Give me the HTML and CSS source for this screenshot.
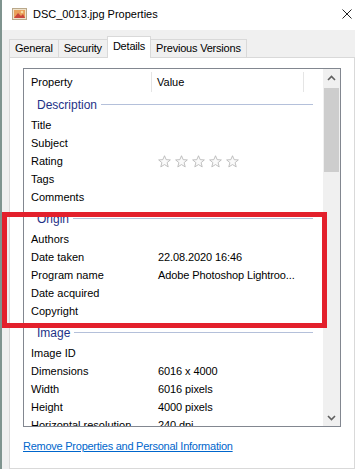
FILE: index.html
```html
<!DOCTYPE html>
<html lang="en">
<head>
    <meta charset="UTF-8">
    <title>DSC_0013.jpg Properties</title>
    <link rel="stylesheet" href="styles.css">
</head>
<body>
    <div class="window">
        <div class="titlebar">
            <svg class="app-icon" width="16" height="14" viewBox="0 0 16 14">
                <rect x="0.5" y="1.5" width="14" height="11" fill="#efe2cc" stroke="#b9a88a"/>
                <rect x="2" y="3" width="11" height="8" fill="#e9a05a"/>
                <path d="M2 11 L6 6 L9 9 L11 7 L13 11 Z" fill="#c9463a"/>
                <circle cx="10" cy="5" r="1.3" fill="#f6dca0"/>
            </svg>
            <span class="title">DSC_0013.jpg Properties</span>
            <span class="close">
                <svg width="10" height="10" viewBox="0 0 10 10">
                    <path d="M0.5 0.5 L9.5 9.5 M9.5 0.5 L0.5 9.5" stroke="#222" stroke-width="1"/>
                </svg>
            </span>
        </div>

        <div class="tabs">
            <div class="tab">General</div>
            <div class="tab">Security</div>
            <div class="tab active">Details</div>
            <div class="tab">Previous Versions</div>
        </div>

        <div class="panel">
            <div class="listview">
                <div class="lv-main">
                    <div class="lv-header">
                        <div class="col-prop">Property</div>
                        <div class="col-value">Value</div>
                        <div class="col-fill"></div>
                    </div>
                    <div class="lv-body">
                        <div class="group"><span>Description</span><i></i></div>
                        <div class="row"><div class="k">Title</div><div class="v"></div></div>
                        <div class="row"><div class="k">Subject</div><div class="v"></div></div>
                        <div class="row">
                            <div class="k">Rating</div>
                            <div class="v stars">
                                <svg viewBox="0 0 14 14"><path d="M7 0.8 L8.8 5 L13.3 5.3 L9.8 8.2 L11 12.8 L7 10.3 L3 12.8 L4.2 8.2 L0.7 5.3 L5.2 5 Z"/></svg>
                                <svg viewBox="0 0 14 14"><path d="M7 0.8 L8.8 5 L13.3 5.3 L9.8 8.2 L11 12.8 L7 10.3 L3 12.8 L4.2 8.2 L0.7 5.3 L5.2 5 Z"/></svg>
                                <svg viewBox="0 0 14 14"><path d="M7 0.8 L8.8 5 L13.3 5.3 L9.8 8.2 L11 12.8 L7 10.3 L3 12.8 L4.2 8.2 L0.7 5.3 L5.2 5 Z"/></svg>
                                <svg viewBox="0 0 14 14"><path d="M7 0.8 L8.8 5 L13.3 5.3 L9.8 8.2 L11 12.8 L7 10.3 L3 12.8 L4.2 8.2 L0.7 5.3 L5.2 5 Z"/></svg>
                                <svg viewBox="0 0 14 14"><path d="M7 0.8 L8.8 5 L13.3 5.3 L9.8 8.2 L11 12.8 L7 10.3 L3 12.8 L4.2 8.2 L0.7 5.3 L5.2 5 Z"/></svg>
                            </div>
                        </div>
                        <div class="row"><div class="k">Tags</div><div class="v"></div></div>
                        <div class="row"><div class="k">Comments</div><div class="v"></div></div>

                        <div class="group"><span>Origin</span><i></i></div>
                        <div class="row"><div class="k">Authors</div><div class="v"></div></div>
                        <div class="row"><div class="k">Date taken</div><div class="v">22.08.2020 16:46</div></div>
                        <div class="row"><div class="k">Program name</div><div class="v">Adobe Photoshop Lightroo...</div></div>
                        <div class="row"><div class="k">Date acquired</div><div class="v"></div></div>
                        <div class="row"><div class="k">Copyright</div><div class="v"></div></div>

                        <div class="group"><span>Image</span><i></i></div>
                        <div class="row"><div class="k">Image ID</div><div class="v"></div></div>
                        <div class="row"><div class="k">Dimensions</div><div class="v">6016 x 4000</div></div>
                        <div class="row"><div class="k">Width</div><div class="v">6016 pixels</div></div>
                        <div class="row"><div class="k">Height</div><div class="v">4000 pixels</div></div>
                        <div class="row"><div class="k">Horizontal resolution</div><div class="v">240 dpi</div></div>
                    </div>
                </div>
                <div class="scrollbar">
                    <div class="sb-btn">
                        <svg width="9" height="6" viewBox="0 0 9 6"><path d="M1 5 L4.5 1.5 L8 5" fill="none" stroke="#606060" stroke-width="1.6"/></svg>
                    </div>
                    <div class="sb-track"><div class="sb-thumb"></div></div>
                    <div class="sb-btn">
                        <svg width="9" height="6" viewBox="0 0 9 6"><path d="M1 1 L4.5 4.5 L8 1" fill="none" stroke="#606060" stroke-width="1.6"/></svg>
                    </div>
                </div>
            </div>
            <div class="footer">
                <a class="remove-link" href="javascript:;">Remove Properties and Personal Information</a>
            </div>
        </div>
    </div>

    <!-- 红框标注 -->
    <div class="highlight"></div>
</body>
</html>
```

FILE: styles.css
```css
* {
    margin: 0;
    padding: 0;
    box-sizing: border-box;
}

body {
    width: 355px;
    height: 469px;
    overflow: hidden;
    position: relative;
    background-color: #f0f0f0;
    font-family: "Liberation Sans", Arial, sans-serif;
    font-size: 11px;
    color: #000;
}

.window {
    height: 100%;
    display: flex;
    flex-direction: column;
    border-left: 2px solid #7f948f;
}

.titlebar {
    height: 30px;
    flex: none;
    display: flex;
    align-items: center;
    background-color: #fff;
    padding-left: 10px;
}

.app-icon {
    margin-right: 5px;
    margin-top: -2px;
}

.title {
    font-size: 11px;
    margin-top: -2px;
}

.close {
    margin-left: auto;
    margin-right: 3px;
    margin-top: -2px;
    display: flex;
}

.tabs {
    height: 27px;
    flex: none;
    display: flex;
    align-items: flex-end;
    padding-left: 7px;
    position: relative;
    z-index: 1;
}

.tab {
    height: 18px;
    line-height: 17px;
    padding: 0 5px;
    letter-spacing: -0.2px;
    border: 1px solid #d9d9d9;
    border-bottom: none;
    margin-right: -1px;
    background-color: #f0f0f0;
}

.tab.active {
    height: 22px;
    line-height: 19px;
    margin-bottom: -1px;
    background-color: #fff;
}

.panel {
    flex: 1;
    margin-left: 7px;
    background-color: #fff;
    border: 1px solid #d9d9d9;
    padding: 10px 0 0 13px;
}

.listview {
    width: 318px;
    height: 359px;
    border: 1px solid #828790;
    display: flex;
}

.lv-main {
    flex: 1;
    overflow: hidden;
}

.lv-header {
    height: 23px;
    display: flex;
    align-items: stretch;
}

.lv-header div {
    display: flex;
    align-items: center;
    margin: 3px 0 0 0;
    border-right: 1px solid #e5e5e5;
}

.lv-header .col-prop {
    width: 128px;
    padding-left: 7px;
}

.lv-header .col-value {
    width: 152px;
    padding-left: 5px;
}

.lv-header .col-fill {
    flex: 1;
    border-right: none;
}

.group {
    height: 24px;
    display: flex;
    align-items: center;
    padding: 0 10px 0 13px;
}

.group span {
    font-size: 12px;
    color: #1e3287;
    margin-top: 1px;
}

.group i {
    flex: 1;
    height: 1px;
    margin-left: 4px;
    background-color: #b4c0da;
}

.row {
    height: 18px;
    display: flex;
    align-items: center;
}

.row .k {
    width: 128px;
    padding-left: 7px;
    white-space: nowrap;
}

.row .v {
    padding-left: 6px;
    white-space: nowrap;
    letter-spacing: -0.1px;
}

.stars {
    display: flex;
    gap: 4px;
    padding-top: 1px;
}

.stars svg {
    width: 13px;
    height: 13px;
    fill: #fafafa;
    stroke: #b5b5b5;
    stroke-width: 0.9;
}

.scrollbar {
    width: 17px;
    background-color: #f0f0f0;
    display: flex;
    flex-direction: column;
}

.sb-btn {
    height: 17px;
    display: flex;
    align-items: center;
    justify-content: center;
}

.sb-track {
    flex: 1;
    padding: 2px 1px;
}

.sb-thumb {
    height: 84px;
    background-color: #cdcdcd;
}

.footer {
    padding-top: 12px;
    line-height: 14px;
}

.remove-link {
    color: #0066cc;
    text-decoration: underline;
    letter-spacing: -0.25px;
}

/* 红框 */
.highlight {
    position: absolute;
    left: 2px;
    top: 212px;
    width: 325px;
    height: 116px;
    border: 5px solid #e3202c;
}
```
